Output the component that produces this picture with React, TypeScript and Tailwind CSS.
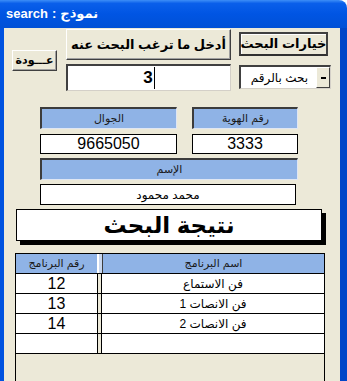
import type { ReactNode } from 'react'

const font = "font-['Liberation_Sans','DejaVu_Sans',sans-serif]"

const rows = [
	{ id: '12', name: 'فن الاستماع' },
	{ id: '13', name: 'فن الانصات 1' },
	{ id: '14', name: 'فن الانصات 2' },
	{ id: '', name: '' },
]

function Head({ className, children }: { className: string; children: ReactNode }) {
	return (
		<div
			className={`flex items-center justify-center bg-[#8fb3e6] border-t-2 border-l-2 border-t-[#3c3c3c] border-l-[#3c3c3c] border-b border-r border-b-[#dfe6f3] border-r-[#dfe6f3] text-[11px] text-[#1a1a1a] ${className}`}
		>
			{children}
		</div>
	)
}

function Value({ className, children }: { className: string; children: ReactNode }) {
	return (
		<div className={`flex items-center justify-center bg-white border border-black text-black ${className}`}>
			{children}
		</div>
	)
}

export default function App() {
	return (
		<div className={`flex h-[381px] w-[347px] flex-col overflow-hidden whitespace-nowrap bg-white ${font}`}>
			{/* title bar */}
			<div
				dir="ltr"
				className="flex h-[28px] items-center rounded-tr-[8px] bg-[linear-gradient(#3d8ef7_0%,#0a5fea_12%,#0055e3_50%,#0050d6_100%)] pl-[6px] text-[13px] font-bold text-white"
			>
				<span>search</span>
				<span className="mx-[4px]">:</span>
				<span>نموذج</span>
			</div>

			<div className="flex flex-1 flex-col border-l-[4px] border-r-[7px] border-l-[#0052e0] border-r-[#0046c8] bg-[#ece9d8]">
				{/* search controls */}
				<div className="flex pl-[8px] pt-[1px]">
					<div className="mt-[21px] flex h-[21px] w-[45px] items-center justify-center border-t border-l border-t-white border-l-white border-b border-r border-b-[#404040] border-r-[#404040] text-[11px] font-bold text-black shadow-[inset_-1px_-1px_0_#a0a0a0]">
						عـــودة
					</div>

					<div className="ml-[9px] flex w-[165px] flex-col">
						<div className="flex h-[31px] items-center justify-center border-t border-l border-t-white border-l-white border-b border-r border-b-[#404040] border-r-[#404040] text-[13px] font-bold text-black shadow-[inset_-1px_-1px_0_#a0a0a0]">
							أدخل ما ترغب البحث عنه
						</div>
						<div className="mt-[4px] flex h-[27px] items-center justify-center border-t-2 border-l-2 border-t-[#404040] border-l-[#404040] border-b border-r border-b-[#d4d0c8] border-r-[#d4d0c8] bg-white text-[17px] font-bold text-black">
							<span>3</span>
							<span className="ml-[1px] h-[22px] w-[1px] bg-black" />
						</div>
					</div>

					<div className="ml-[8px] flex w-[92px] flex-col">
						<div className="mt-[3px] flex h-[24px] w-[89px] items-center justify-center border-2 border-[#404040] border-b-[#303030] text-[13px] font-bold text-black shadow-[inset_1px_1px_0_#fff]">
							خيارات البحث
						</div>
						<div className="mt-[9px] flex h-[24px] w-[92px] border-t-2 border-l-2 border-t-[#404040] border-l-[#404040] border-b border-r border-b-[#d4d0c8] border-r-[#d4d0c8] bg-white">
							<div className="flex flex-1 items-center justify-end pr-[8px] text-[12px] text-black">
								بحث بالرقم
							</div>
							<div className="flex w-[14px] items-center justify-center border-t border-l border-t-white border-l-white border-b border-r border-b-[#404040] border-r-[#404040] bg-[#ece9d8]">
								<span className="h-[2px] w-[5px] bg-black" />
							</div>
						</div>
					</div>
				</div>

				{/* person details */}
				<div className="mt-[16px] flex flex-col pl-[36px]">
					<div className="flex">
						<Head className="h-[22px] w-[137px]">الجوال</Head>
						<Head className="ml-[15px] h-[22px] w-[106px]">رقم الهوية</Head>
					</div>
					<div className="mt-[5px] flex">
						<Value className="h-[20px] w-[137px] text-[16px]">9665050</Value>
						<Value className="ml-[15px] h-[20px] w-[106px] text-[16px]">3333</Value>
					</div>
					<Head className="mt-[4px] h-[22px] w-[258px]">الإسم</Head>
					<Value className="mt-[4px] h-[21px] w-[256px] text-[12px]">محمد محمود</Value>
				</div>

				{/* result title */}
				<div className="ml-[12px] mt-[4px] flex h-[32px] w-[306px] items-center justify-center border border-black bg-white text-[23px] font-bold text-black shadow-[4px_4px_0_#000]">
					نتيجة البحث
				</div>

				{/* programs table */}
				<div className="ml-[11px] mt-[12px] flex w-[310px] flex-1 flex-col border-t border-l border-r border-black">
					<div className="flex h-[20px] bg-[#8fb3e6] border-b border-black text-[11px] text-[#1a1a1a]">
						<div className="flex w-[81px] items-center justify-center">رقم البرنامج</div>
						<div className="w-[5px] border-l-2 border-white bg-[#c9d7ee]" />
						<div className="flex flex-1 items-center justify-center border-l border-[#3c3c3c]">اسم البرنامج</div>
					</div>
					{rows.map((row, i) => (
						<div key={i} className="flex h-[20px] border-b border-black bg-white text-black">
							<div className="flex w-[81px] items-center justify-center text-[16px]">{row.id}</div>
							<div className="w-[5px] border-l border-r border-black bg-[#ece9d8]" />
							<div className="flex flex-1 items-center justify-center text-[12px]">{row.name}</div>
						</div>
					))}
				</div>
			</div>
		</div>
	)
}
